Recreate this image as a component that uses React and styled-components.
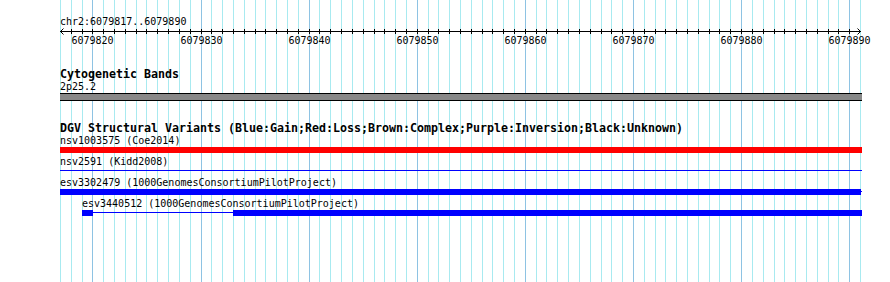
import React from "react";
import styled, { createGlobalStyle } from "styled-components";

const START = 6079817;
const END = 6079890;
const BASES = END - START + 1; // 74
const LEFT = 60;
const PX = 800 / BASES;
const TRACK_W = 802;
const PAGE_W = 890;
const PAGE_H = 282;

const MONO = `"DejaVu Sans Mono", "Liberation Mono", monospace`;

const GlobalStyle = createGlobalStyle`
  html, body { margin: 0; padding: 0; background: #fff; }
  body { font-family: ${MONO}; color: #000; }
`;

const Page = styled.div`
  position: relative;
  width: ${PAGE_W}px;
  height: ${PAGE_H}px;
  overflow: hidden;
  background: #fff;
`;

const GridLayer = styled.svg`
  position: absolute;
  left: 0;
  top: 0;
  pointer-events: none;
`;

const Content = styled.div`
  position: relative;
  display: flex;
  flex-direction: column;
  width: ${TRACK_W}px;
  padding: 15px 0 0 ${LEFT}px;
`;

const PositionLabel = styled.div`
  font-size: 10px;
  line-height: 13px;
  height: 13px;
  white-space: pre;
`;

const RulerSvg = styled.svg`
  display: block;
  margin-bottom: 20px;
  overflow: visible;
`;

const Track = styled.section`
  display: flex;
  flex-direction: column;
  margin-bottom: ${(p) => p.$gap || 0}px;
`;

const TrackTitle = styled.div`
  font-weight: bold;
  font-size: 11.63px;
  line-height: 12px;
  height: 12px;
  white-space: pre;
`;

const ItemLabel = styled.div`
  font-size: 10px;
  line-height: 13px;
  height: 13px;
  white-space: pre;
  padding-left: ${(p) => p.$indent || 0}px;
`;

const BandBar = styled.div`
  height: 6px;
  background: #888888;
  border-top: 1px solid #000;
  border-bottom: 1px solid #000;
`;

const FeatureList = styled.div`
  display: flex;
  flex-direction: column;
  gap: 2px;
`;

const Feature = styled.div`
  display: flex;
  flex-direction: column;
`;

const BarRow = styled.div`
  display: flex;
  align-items: flex-start;
  height: 6px;
  padding-left: ${(p) => p.$indent || 0}px;
`;

const Block = styled.div`
  flex: none;
  width: ${(p) => p.$w}px;
  height: 6px;
  background: ${(p) => p.$color};
`;

const Intron = styled.div`
  flex: none;
  width: ${(p) => p.$w}px;
  height: 1px;
  margin-top: 2px;
  background: ${(p) => p.$color};
`;

const RED = "#ff0000";
const BLUE = "#0000ff";

const features = [
  { label: "nsv1003575 (Coe2014)", color: RED, indent: 0, parts: [["b", 802]] },
  { label: "nsv2591 (Kidd2008)", color: BLUE, indent: 0, parts: [["l", 802]] },
  {
    label: "esv3302479 (1000GenomesConsortiumPilotProject)",
    color: BLUE,
    indent: 0,
    parts: [["b", 801], ["l", 1]],
  },
  {
    label: "esv3440512 (1000GenomesConsortiumPilotProject)",
    color: BLUE,
    indent: 22,
    parts: [["b", 11], ["l", 140], ["b", 629]],
  },
];

const gx = (i) => Math.round(LEFT + i * PX);

function Grid() {
  const lines = [];
  for (let i = 0; i <= BASES; i++) {
    const major = (START + i) % 10 === 0;
    const x = gx(i) + 0.5;
    lines.push(
      <line
        key={i}
        x1={x}
        x2={x}
        y1={0}
        y2={PAGE_H}
        stroke={major ? "#8ec3e3" : "#a8eaf0"}
        strokeWidth="1"
      />
    );
  }
  return (
    <GridLayer width={PAGE_W} height={PAGE_H} shapeRendering="crispEdges">
      {lines}
    </GridLayer>
  );
}

function Ruler() {
  const ticks = [];
  const labels = [];
  for (let i = 1; i < BASES; i++) {
    const x = Math.round(i * PX) + 0.5;
    ticks.push(<line key={"t" + i} x1={x} x2={x} y1={1} y2={6} stroke="#000" />);
    if ((START + i) % 10 === 0) {
      labels.push(
        <text
          key={"l" + i}
          x={x}
          y={16}
          textAnchor="middle"
          fontFamily={MONO}
          fontSize="10"
          fill="#000"
        >
          {START + i}
        </text>
      );
    }
  }
  return (
    <RulerSvg width={TRACK_W} height={20}>
      <g shapeRendering="crispEdges">
        <line x1={0} x2={801} y1={3.5} y2={3.5} stroke="#000" />
        {ticks}
      </g>
      <polyline points="3.5,0.5 0.5,3.5 3.5,6.5" fill="none" stroke="#000" />
      <polyline points="797.5,0.5 800.5,3.5 797.5,6.5" fill="none" stroke="#000" />
      {labels}
    </RulerSvg>
  );
}

export default function App() {
  return (
    <Page>
      <GlobalStyle />
      <Grid />
      <Content>
        <PositionLabel>chr2:6079817..6079890</PositionLabel>
        <Ruler />
        <Track $gap={21}>
          <TrackTitle>Cytogenetic Bands</TrackTitle>
          <ItemLabel>2p25.2</ItemLabel>
          <BandBar />
        </Track>
        <Track>
          <TrackTitle>
            DGV Structural Variants (Blue:Gain;Red:Loss;Brown:Complex;Purple:Inversion;Black:Unknown)
          </TrackTitle>
          <FeatureList>
            {features.map((f) => (
              <Feature key={f.label}>
                <ItemLabel $indent={f.indent}>{f.label}</ItemLabel>
                <BarRow $indent={f.indent}>
                  {f.parts.map(([kind, w], k) =>
                    kind === "b" ? (
                      <Block key={k} $w={w} $color={f.color} />
                    ) : (
                      <Intron key={k} $w={w} $color={f.color} />
                    )
                  )}
                </BarRow>
              </Feature>
            ))}
          </FeatureList>
        </Track>
      </Content>
    </Page>
  );
}
